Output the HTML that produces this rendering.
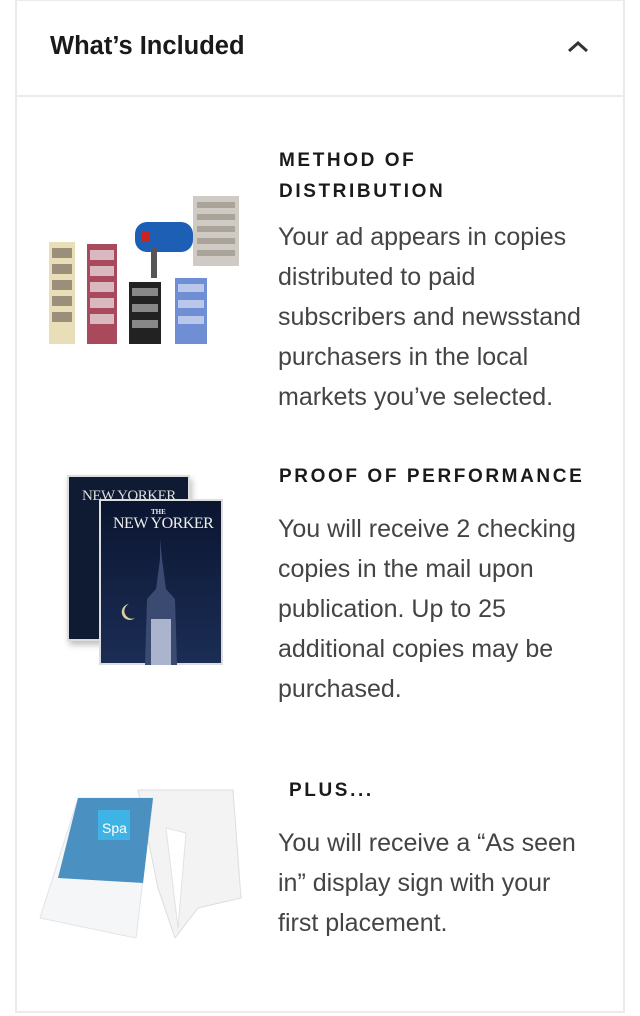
<!DOCTYPE html>
<html><head><meta charset="utf-8"><style>
*{margin:0;padding:0;box-sizing:border-box}
body{width:640px;height:1016px;background:#fff;font-family:"Liberation Sans",sans-serif;position:relative;overflow:hidden}
.box{position:absolute;left:15px;top:0;width:610px;height:1013px;border:2px solid #ebebeb;border-top:1px solid #ebebeb}
.hdr{position:absolute;left:15px;top:95px;width:610px;height:2px;background:#ebebeb}
.title{position:absolute;left:50px;top:32px;font-size:25.5px;font-weight:bold;color:#1a1a1a;letter-spacing:0}
.h{position:absolute;left:279px;font-size:19px;font-weight:bold;letter-spacing:2.6px;color:#1a1a1a;line-height:31px}
.p{position:absolute;left:278px;width:318px;font-size:25px;line-height:40px;color:#444;letter-spacing:0}
.abs{position:absolute}
</style></head><body>
<div class="box"></div>
<div class="hdr"></div>
<div class="title">What’s Included</div>
<svg class="abs" style="left:567px;top:40px" width="22" height="14"><path d="M2 11 L11 3 L20 11" fill="none" stroke="#333" stroke-width="3"/></svg>

<div class="h" style="top:145px">METHOD OF<br>DISTRIBUTION</div>
<div class="p" style="top:217px">Your ad appears in copies distributed to paid subscribers and newsstand purchasers in the local markets you’ve selected.</div>

<div class="h" style="top:461px">PROOF OF PERFORMANCE</div>
<div class="p" style="top:509px">You will receive 2 checking copies in the mail upon publication. Up to 25 additional copies may be purchased.</div>

<div class="h" style="top:775px;left:289px">PLUS...</div>
<div class="p" style="top:823px">You will receive a “As seen in” display sign with your first placement.</div>

<svg class="abs" style="left:45px;top:190px" width="200" height="160">
<rect x="4" y="52" width="26" height="102" fill="#e8dfb8"/>
<g fill="#9a8f7a"><rect x="7" y="58" width="20" height="10"/><rect x="7" y="74" width="20" height="10"/><rect x="7" y="90" width="20" height="10"/><rect x="7" y="106" width="20" height="10"/><rect x="7" y="122" width="20" height="10"/></g>
<rect x="42" y="54" width="30" height="100" fill="#a84a5c"/>
<g fill="#d9b9bf"><rect x="45" y="60" width="24" height="10"/><rect x="45" y="76" width="24" height="10"/><rect x="45" y="92" width="24" height="10"/><rect x="45" y="108" width="24" height="10"/><rect x="45" y="124" width="24" height="10"/></g>
<rect x="90" y="32" width="58" height="30" rx="12" fill="#1d5fb5"/>
<rect x="106" y="58" width="6" height="30" fill="#555"/>
<rect x="96" y="42" width="8" height="10" fill="#c22"/>
<rect x="148" y="6" width="46" height="70" fill="#cfcac3"/>
<g fill="#aaa39a"><rect x="152" y="12" width="38" height="6"/><rect x="152" y="24" width="38" height="6"/><rect x="152" y="36" width="38" height="6"/><rect x="152" y="48" width="38" height="6"/><rect x="152" y="60" width="38" height="6"/></g>
<rect x="84" y="92" width="32" height="62" fill="#222"/>
<g fill="#888"><rect x="87" y="98" width="26" height="8"/><rect x="87" y="114" width="26" height="8"/><rect x="87" y="130" width="26" height="8"/></g>
<rect x="130" y="88" width="32" height="66" fill="#6f8ed4"/>
<g fill="#b9c7ea"><rect x="133" y="94" width="26" height="8"/><rect x="133" y="110" width="26" height="8"/><rect x="133" y="126" width="26" height="8"/></g>
</svg>

<div class="abs" style="left:67px;top:475px;width:123px;height:166px;background:#0f1a33;border:2px solid #ddd;box-shadow:2px 4px 6px rgba(0,0,0,.25)"></div>
<div class="abs" style="left:82px;top:488px;font:15px 'Liberation Serif',serif;color:#ddd;letter-spacing:-0.5px">NEW YORKER</div>
<div class="abs" style="left:99px;top:499px;width:124px;height:166px;background:linear-gradient(#0b1530,#1b2d55);border:2px solid #ddd"></div>
<div class="abs" style="left:151px;top:508px;font:bold 7px 'Liberation Serif',serif;color:#eee">THE</div>
<div class="abs" style="left:113px;top:515px;font:16px 'Liberation Serif',serif;color:#eee;letter-spacing:-0.5px">NEW YORKER</div>
<svg class="abs" style="left:99px;top:499px" width="124" height="166"><path d="M61 40 L61 60 L57 90 L48 100 L46 166 L78 166 L76 100 L67 90 L63 60Z" fill="#3a4a70"/><rect x="52" y="120" width="20" height="46" fill="#aab4cc"/><path d="M30 105 a8 8 0 1 0 6 14 a7 7 0 1 1 -6 -14z" fill="#d8cfa0"/></svg>

<svg class="abs" style="left:38px;top:788px" width="240" height="150">
<path d="M100 2 L195 2 L203 110 L160 120 L137 150 L120 100 Z" fill="#f3f3f3" stroke="#ddd"/>
<path d="M128 40 L140 140 L148 45 Z" fill="#fff" stroke="#e2e2e2"/>
<path d="M40 10 L115 10 L98 150 L2 130 Z" fill="#f4f6f8" stroke="#e4e4e4"/>
<path d="M40 10 L115 10 L105 95 L20 90 Z" fill="#4a90c0"/>
<rect x="60" y="22" width="32" height="30" fill="#3fb3e5"/>
<text x="64" y="45" font-family="Liberation Sans" font-size="14" fill="#fff">Spa</text>
</svg>
</body></html>
